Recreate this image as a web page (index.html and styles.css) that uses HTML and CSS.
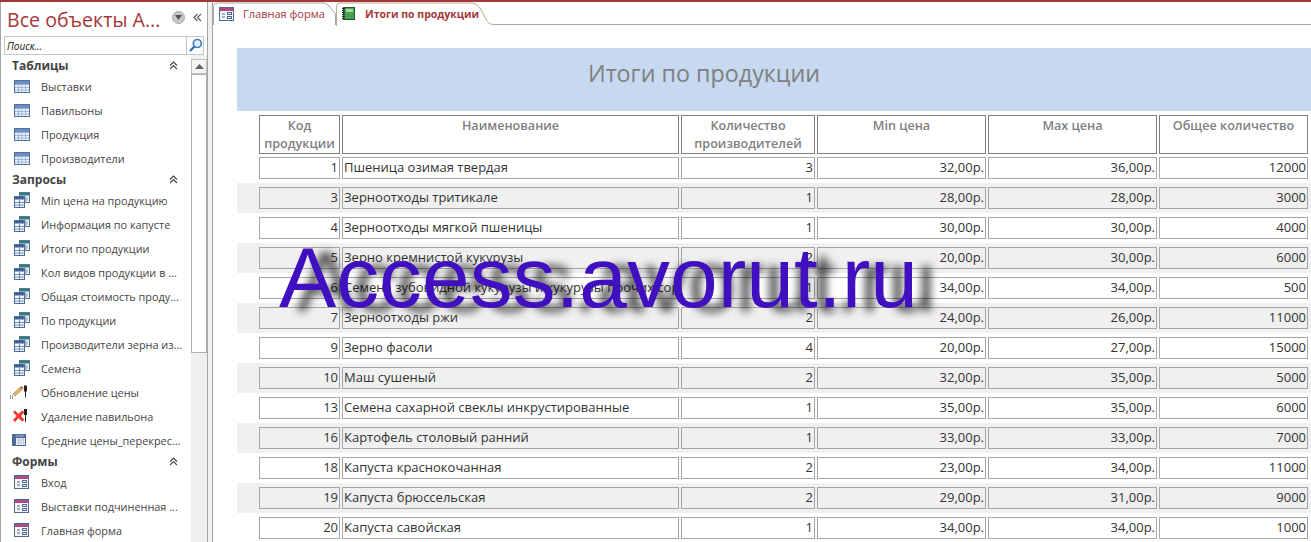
FILE: index.html
```html
<!DOCTYPE html>
<html lang="ru">
<head>
<meta charset="utf-8">
<title>Итоги по продукции</title>
<link rel="stylesheet" href="styles.css">
</head>
<body>
<svg class="defs" width="0" height="0">
  <symbol id="i-table" viewBox="0 0 16 13">
    <rect x="0.5" y="0.5" width="15" height="12" fill="#eef2f8" stroke="#4f6f9f"/>
    <rect x="1" y="1" width="14" height="3" fill="#6d8fbf"/>
    <path d="M1 4.500h14M1 7.500h14M1 10h14M4.500 4v8M8 4v8M11.500 4v8" stroke="#9db4d6" fill="none"/>
  </symbol>
  <symbol id="i-query" viewBox="0 0 16 16">
    <rect x="5.5" y="0.5" width="10" height="10" fill="#eef4f4" stroke="#4f8088"/>
    <rect x="6" y="1" width="9" height="2.5" fill="#2f7a86"/>
    <path d="M11 4v6M7 6h7M7 8h7" stroke="#7aa0a8"/>
    <rect x="0.5" y="4.5" width="10" height="11" fill="#f4f7fb" stroke="#4f6c98"/>
    <rect x="1" y="5" width="9" height="2.5" fill="#3f6296"/>
    <path d="M5.5 8v7M1 10.500h9M1 13h9" stroke="#6f8cb8"/>
  </symbol>
  <symbol id="i-form" viewBox="0 0 15 14">
    <rect x="0.500" y="0.500" width="14" height="13" fill="#f5f8fc" stroke="#51698f"/>
    <rect x="1" y="1" width="13" height="3" fill="#b0487c"/>
    <path d="M3 7h3M3 10h3" stroke="#51698f"/>
    <rect x="8.500" y="5.500" width="4" height="2" fill="none" stroke="#51698f"/>
    <rect x="8.500" y="9.500" width="4" height="2" fill="none" stroke="#51698f"/>
  </symbol>
  <symbol id="i-update" viewBox="0 0 18 14">
    <path d="M3 9 10 2.500 12 4.500 5 11z" fill="#e8b860" stroke="#907850" stroke-width=".7"/>
    <path d="M10 2.500l1.500-1.500 2 2-1.500 1.500z" fill="#c85a40"/>
    <path d="M0 13h1M2 13h1M0 11h1M2 11h1" stroke="#333"/>
    <path d="M14 0.500h3v6h-1v5l-.5 2-.5-2v-5h-1z" fill="#222"/>
  </symbol>
  <symbol id="i-delete" viewBox="0 0 18 14">
    <path d="M3 3 5 1.500 8.500 5 12 1.500 14.500 3 11 7l3.500 4-2.500 1.500-3.500-3.500L5 13 3 11l3.500-4z" fill="#f0382c"/>
    <path d="M14 0h3v6h-1v6l-.5 2-.5-2V6h-1z" fill="#222"/>
  </symbol>
  <symbol id="i-cross" viewBox="0 0 14 12">
    <rect x="0.500" y="0.500" width="13" height="11" fill="#e6ebf6" stroke="#4f6c98"/>
    <rect x="1" y="1" width="12" height="3" fill="#4f6c98"/>
    <rect x="1" y="1" width="3" height="10" fill="#4f6c98"/>
    <path d="M5 6h8M5 8.500h8M6.500 4v7M9 4v7M11.500 4v7" stroke="#a9b8d6" stroke-width=".6"/>
    <path d="M5 1v2M7 1v2M9 1v2M11 1v2" stroke="#d8e0f0" stroke-width=".7"/>
  </symbol>
  <symbol id="i-report" viewBox="0 0 13 13">
    <rect x="1.500" y="0.500" width="11" height="12" fill="#4aa050" stroke="#1d5a2a"/>
    <rect x="4" y="2" width="7" height="3" fill="#a8d8a0"/>
    <path d="M0 1.500h3M0 3.500h3M0 5.500h3M0 7.500h3M0 9.500h3M0 11.500h3" stroke="#222"/>
  </symbol>
  <symbol id="i-chev" viewBox="0 0 9 9">
    <path d="M1 4.500 4.500 1 8 4.500M1 8 4.500 4.500 8 8" fill="none" stroke="#444" stroke-width="1.100"/>
  </symbol>
</svg>

<div class="app">
  <aside class="nav">
    <div class="nav-head">
      <span class="nav-title">Все объекты А...</span>
      <span class="nav-drop"><svg width="7" height="5" viewBox="0 0 7 5"><path d="M0 0h7L3.500 5z" fill="#555"/></svg></span>
      <svg class="nav-collapse" width="9" height="9" viewBox="0 0 9 9"><path d="M4.500 1 1 4.500 4.500 8M8 1 4.500 4.500 8 8" fill="none" stroke="#555" stroke-width="1.100"/></svg>
    </div>
    <div class="search">
      <span class="search-text">Поиск...</span>
      <span class="search-btn"><svg width="15" height="15" viewBox="0 0 15 15"><circle cx="9.300" cy="5.500" r="4" fill="#e4f0fa" stroke="#3f80c0" stroke-width="1.700"/><path d="M6.300 8.500 2 13" stroke="#3570ac" stroke-width="2.400"/></svg></span>
    </div>
    <div class="nav-body">
      <div class="nav-list">
        <div class="group"><span>Таблицы</span><svg class="chev"><use href="#i-chev"/></svg></div>
        <div class="item"><svg class="ic ic-t"><use href="#i-table"/></svg><span>Выставки</span></div>
        <div class="item"><svg class="ic ic-t"><use href="#i-table"/></svg><span>Павильоны</span></div>
        <div class="item"><svg class="ic ic-t"><use href="#i-table"/></svg><span>Продукция</span></div>
        <div class="item"><svg class="ic ic-t"><use href="#i-table"/></svg><span>Производители</span></div>
        <div class="group"><span>Запросы</span><svg class="chev"><use href="#i-chev"/></svg></div>
        <div class="item"><svg class="ic"><use href="#i-query"/></svg><span>Min цена на продукцию</span></div>
        <div class="item"><svg class="ic"><use href="#i-query"/></svg><span>Информация по капусте</span></div>
        <div class="item"><svg class="ic"><use href="#i-query"/></svg><span>Итоги по продукции</span></div>
        <div class="item"><svg class="ic"><use href="#i-query"/></svg><span>Кол видов продукции в ...</span></div>
        <div class="item"><svg class="ic"><use href="#i-query"/></svg><span>Общая стоимость проду...</span></div>
        <div class="item"><svg class="ic"><use href="#i-query"/></svg><span>По продукции</span></div>
        <div class="item"><svg class="ic"><use href="#i-query"/></svg><span>Производители зерна из...</span></div>
        <div class="item"><svg class="ic"><use href="#i-query"/></svg><span>Семена</span></div>
        <div class="item"><svg class="ic ic-a"><use href="#i-update"/></svg><span>Обновление цены</span></div>
        <div class="item"><svg class="ic ic-a"><use href="#i-delete"/></svg><span>Удаление павильона</span></div>
        <div class="item"><svg class="ic ic-c"><use href="#i-cross"/></svg><span>Средние цены_перекрес...</span></div>
        <div class="group"><span>Формы</span><svg class="chev"><use href="#i-chev"/></svg></div>
        <div class="item"><svg class="ic ic-f"><use href="#i-form"/></svg><span>Вход</span></div>
        <div class="item"><svg class="ic ic-f"><use href="#i-form"/></svg><span>Выставки подчиненная ...</span></div>
        <div class="item"><svg class="ic ic-f"><use href="#i-form"/></svg><span>Главная форма</span></div>
      </div>
      <div class="scroll">
        <div class="scroll-up"><svg width="9" height="5" viewBox="0 0 9 5"><path d="M0 5h9L4.500 0z" fill="#606060"/></svg></div>
        <div class="scroll-thumb"></div>
      </div>
    </div>
  </aside>
  <div class="split"></div>
  <main class="main">
    <div class="tabs">
      <div class="tab">
        <svg class="tab-shape" width="123" height="23" viewBox="0 0 123 23"><path d="M.5 23V4Q.5 1 4 1H110Q114 1 116 4L122.500 12V23" fill="#fff" stroke="#a6a6a6"/></svg>
        <svg class="tab-ic"><use href="#i-form"/></svg><span class="tab-label">Главная форма</span>
      </div>
      <div class="tab tab-on">
        <svg class="tab-shape" width="158" height="24" viewBox="0 0 158 24"><path d="M.5 24V4Q.5 1 4 1H136Q141 1 144 6L150 17Q152 22.500 158 22.500V24Z" fill="#fff"/><path d="M.5 24V4Q.5 1 4 1H136Q141 1 144 6L150 17Q152 22.500 158 22.500" fill="none" stroke="#b9ab8f"/></svg>
        <svg class="tab-ic2"><use href="#i-report"/></svg><span class="tab-label">Итоги по продукции</span>
      </div>
    </div>
    <div class="report">
      <div class="banner">Итоги по продукции</div>
      <div class="thead">
        <div class="th">Код продукции</div>
        <div class="th">Наименование</div>
        <div class="th">Количество производителей</div>
        <div class="th">Min цена</div>
        <div class="th">Max цена</div>
        <div class="th">Общее количество</div>
      </div>
      <div class="row"><div class="td r">1</div><div class="td">Пшеница озимая твердая</div><div class="td r">3</div><div class="td r">32,00р.</div><div class="td r">36,00р.</div><div class="td r">12000</div></div>
      <div class="row alt"><div class="td r">3</div><div class="td">Зерноотходы тритикале</div><div class="td r">1</div><div class="td r">28,00р.</div><div class="td r">28,00р.</div><div class="td r">3000</div></div>
      <div class="row"><div class="td r">4</div><div class="td">Зерноотходы мягкой пшеницы</div><div class="td r">1</div><div class="td r">30,00р.</div><div class="td r">30,00р.</div><div class="td r">4000</div></div>
      <div class="row alt"><div class="td r">5</div><div class="td">Зерно кремнистой кукурузы</div><div class="td r">2</div><div class="td r">20,00р.</div><div class="td r">30,00р.</div><div class="td r">6000</div></div>
      <div class="row"><div class="td r">6</div><div class="td">Семена зубовидной кукурузы и кукурузы прочих сортов</div><div class="td r">1</div><div class="td r">34,00р.</div><div class="td r">34,00р.</div><div class="td r">500</div></div>
      <div class="row alt"><div class="td r">7</div><div class="td">Зерноотходы ржи</div><div class="td r">2</div><div class="td r">24,00р.</div><div class="td r">26,00р.</div><div class="td r">11000</div></div>
      <div class="row"><div class="td r">9</div><div class="td">Зерно фасоли</div><div class="td r">4</div><div class="td r">20,00р.</div><div class="td r">27,00р.</div><div class="td r">15000</div></div>
      <div class="row alt"><div class="td r">10</div><div class="td">Маш сушеный</div><div class="td r">2</div><div class="td r">32,00р.</div><div class="td r">35,00р.</div><div class="td r">5000</div></div>
      <div class="row"><div class="td r">13</div><div class="td">Семена сахарной свеклы инкрустированные</div><div class="td r">1</div><div class="td r">35,00р.</div><div class="td r">35,00р.</div><div class="td r">6000</div></div>
      <div class="row alt"><div class="td r">16</div><div class="td">Картофель столовый ранний</div><div class="td r">1</div><div class="td r">33,00р.</div><div class="td r">33,00р.</div><div class="td r">7000</div></div>
      <div class="row"><div class="td r">18</div><div class="td">Капуста краснокочанная</div><div class="td r">2</div><div class="td r">23,00р.</div><div class="td r">34,00р.</div><div class="td r">11000</div></div>
      <div class="row alt"><div class="td r">19</div><div class="td">Капуста брюссельская</div><div class="td r">2</div><div class="td r">29,00р.</div><div class="td r">31,00р.</div><div class="td r">9000</div></div>
      <div class="row"><div class="td r">20</div><div class="td">Капуста савойская</div><div class="td r">1</div><div class="td r">34,00р.</div><div class="td r">34,00р.</div><div class="td r">1000</div></div>
    </div>
  </main>
</div>
<div class="watermark">Access.avorut.ru</div>
</body>
</html>
```

FILE: styles.css
```css
* { box-sizing: border-box; }
html, body { margin: 0; padding: 0; height: 542px; overflow: hidden; background: #fff; }
body { font-family: "Open Sans", "Noto Sans", sans-serif; position: relative; }
.defs { position: absolute; }
.app { display: flex; height: 542px; border-top: 2px solid #a4373a; background: #fff; }

/* navigation pane */
.nav { width: 207px; flex: none; border-left: 1px solid #a6a6a6; padding-left: 1px; overflow: hidden; }
.nav-head { height: 34px; display: flex; align-items: center; padding: 0 0 3px 5px; }
.nav-title { font-size: 19.600px; color: #a4373a; width: 165px; white-space: nowrap; line-height: 31px; padding-top: 3px; }
.nav-drop { width: 13px; height: 13px; border-radius: 50%; background: #c8c8c8; border: 1px solid #a8a8a8; display: flex; align-items: center; justify-content: center; }
.nav-collapse { margin-left: 8px; }
.search { height: 19px; margin: 0 0 0 2px; width: 200px; border: 1px solid #c6c6c6; display: flex; align-items: center; justify-content: space-between; }
.search-text { font-size: 10px; font-style: italic; color: #111; padding-left: 2px; }
.search-btn { width: 17px; height: 17px; border-left: 1px solid #c6c6c6; display: flex; align-items: center; justify-content: center; }
.nav-body { display: flex; height: 488px; }
.nav-list { width: 189px; flex: none; padding-top: 1px; }
.group { height: 18px; display: flex; align-items: center; justify-content: space-between; padding: 0 13px 0 10px; font-size: 12px; font-weight: 700; color: #444; }
.chev { width: 9px; height: 9px; }
.item { height: 24px; display: flex; align-items: center; font-size: 10.900px; color: #444; white-space: nowrap; }
.ic { width: 16px; height: 16px; margin: 0 11px 0 12px; flex: none; }
.ic-t { height: 13px; }
.ic-a { width: 18px; height: 14px; margin: 0 13px 0 8px; }
.ic-c { width: 14px; height: 12px; margin: 0 15px 0 10px; }
.ic-f { width: 15px; height: 14px; margin: 0 12px 0 12px; }
.scroll { width: 16px; padding-top: 4px; background: #f0f0f0; display: flex; flex-direction: column; }
.scroll-up { height: 15px; flex: none; border: 1px solid #c0c0c0; background: #f4f4f4; display: flex; align-items: center; justify-content: center; }
.scroll-thumb { height: 279px; flex: none; border: 1px solid #b0b0b0; background: #fff; }
.split { width: 6px; flex: none; background: #f0f0f0; border-left: 1px solid #a6a6a6; border-right: 1px solid #a6a6a6; }

/* document */
.main { flex: 1; min-width: 0; }
.tabs { height: 23px; display: flex; align-items: flex-start; border-bottom: 1px solid #a6a6a6; }
.tab { position: relative; height: 23px; width: 123px; flex: none; display: flex; align-items: center; padding-left: 6px; font-size: 11px; color: #a4373a; }
.tab-shape { position: absolute; left: 0; top: 0; }
.tab-label { position: relative; }
.tab-ic { position: relative; width: 15px; height: 14px; margin-right: 9px; }
.tab-ic2 { position: relative; width: 13px; height: 13px; margin-right: 10px; }
.tab-on { width: 158px; height: 24px; padding: 0 0 1px 6px; font-size: 10.500px; font-weight: 700; }
.report { padding: 23px 0 0 24px; }
.banner { height: 63px; background: #c6d9f1; display: flex; align-items: center; justify-content: center; font-size: 23.300px; color: #808080; padding: 0 140px 14px 0; }
.thead, .row { display: grid; grid-template-columns: 81px 337px 134px 169px 169px 149px; column-gap: 2px; padding-left: 22px; }
.thead { margin-top: 4px; height: 38px; }
.th { border: 1px solid #7f7f7f; background: #fff; font-size: 12.600px; font-weight: 600; color: #808080; text-align: center; line-height: 18px; padding-top: 1px; }
.row { height: 30px; padding-top: 4px; background: #fff; align-items: start; }
.alt { background: #f0f0f0; }
.td { height: 22px; border: 1px solid #a6a6a6; background: #fff; font-size: 13px; color: #333; line-height: 18px; padding: 0 1px; white-space: nowrap; overflow: hidden; }
.alt .td { background: #f0f0f0; }
.r { text-align: right; }

/* overlay */
.watermark { position: absolute; left: 279px; top: 229px; font-family: "Liberation Sans", sans-serif; font-size: 85.800px; line-height: 96px; color: #3f0fc0; white-space: nowrap; text-shadow: 18px 4px 9px rgba(0,0,0,.75); }
```
